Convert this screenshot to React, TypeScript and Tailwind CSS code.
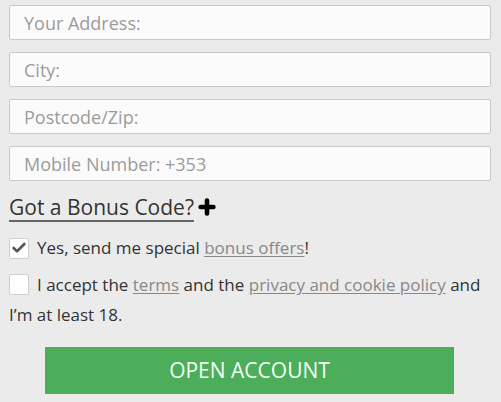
import { Check, Plus } from "lucide-react";

const fields = ["Your Address:", "City:", "Postcode/Zip:", "Mobile Number: +353"];

export default function App() {
  return (
    <div className="w-[501px] h-[402px] bg-[#ebebeb] overflow-hidden font-['Open_Sans',sans-serif] text-[#333]">
      <div className="pl-[9px] pr-[10px] pt-[5px] flex flex-col gap-[12px]">
        {fields.map((f) => (
          <input
            key={f}
            placeholder={f}
            className="h-[35px] w-full bg-[#fbfbfb] border border-[#c9c9c9] rounded-[2px] px-[14px] text-[18px] placeholder:text-[#9b9b9b] outline-none"
          />
        ))}
      </div>

      <div className="pl-[9px] mt-[12px] flex items-center">
        <span className="text-[21px] leading-[28px] underline decoration-[#666] decoration-2 underline-offset-[5px]">
          Got a Bonus Code?
        </span>
        <Plus size={22} strokeWidth={5} className="ml-[2px] text-black" />
      </div>

      <div className="pl-[9px] pr-[10px] mt-[12px] text-[17px] leading-[30px]">
        <div className="flex items-center">
          <span className="w-[20px] h-[21px] bg-white border border-[#cfcfcf] rounded-[2px] flex items-center justify-center mr-[8px]">
            <Check size={16} strokeWidth={4} className="text-[#555]" />
          </span>
          <span>
            Yes, send me special{" "}
            <a className="text-[#888] underline underline-offset-2">bonus offers</a>!
          </span>
        </div>
        <div className="mt-[7px]">
          <span className="inline-block align-middle w-[20px] h-[21px] bg-white border border-[#cfcfcf] rounded-[2px] mr-[8px] -mt-[4px]" />
          I accept the <a className="text-[#888] underline underline-offset-2">terms</a> and the{" "}
          <a className="text-[#888] underline underline-offset-2">privacy and cookie policy</a> and I’m at least 18.
        </div>
      </div>

      <div className="flex justify-center mt-[17px] pr-[2px]">
        <button className="w-[409px] h-[47px] bg-[#4cad5b] text-[#f4fff4] text-[21px] uppercase">
          Open Account
        </button>
      </div>
    </div>
  );
}
